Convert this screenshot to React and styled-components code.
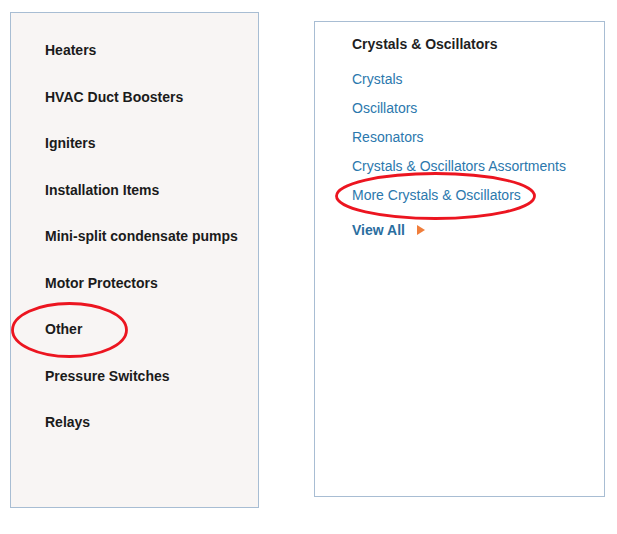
import React from 'react'
import styled, { createGlobalStyle } from 'styled-components'

const GlobalStyle = createGlobalStyle`
    body {
        margin: 0;
        background: #ffffff;
        font-family: "Liberation Sans", Arial, Helvetica, sans-serif;
    }
`

const Page = styled.div`
    display: flex;
    flex-direction: row;
    align-items: flex-start;
    width: 617px;
    height: 534px;
    padding: 12px 0 0 10px;
    box-sizing: border-box;
`

const CategoryPanel = styled.div`
    width: 249px;
    height: 496px;
    box-sizing: border-box;
    border: 1px solid #a8bdd3;
    background-color: #f8f5f4;
    padding: 14px 0 0 34px;
`

const CategoryList = styled.ul`
    list-style: none;
    margin: 0;
    padding: 0;
`

const CategoryItem = styled.li`
    position: relative;
    height: 46.5px;
    line-height: 46.5px;
    font-size: 14px;
    font-weight: bold;
    color: #1b1b1b;
`

const SubPanel = styled.div`
    width: 291px;
    height: 476px;
    margin: 9px 0 0 55px;
    box-sizing: border-box;
    border: 1px solid #a8bdd3;
    background-color: #ffffff;
    padding: 12px 0 0 37px;
`

const SubHeading = styled.h3`
    margin: 0 0 10.5px 0;
    font-size: 14px;
    line-height: 20px;
    font-weight: bold;
    color: #1f1f1f;
`

const SubLink = styled.a`
    position: relative;
    display: block;
    height: 29px;
    line-height: 29px;
    font-size: 14px;
    color: #2b78ad;
    text-decoration: none;
`

const ViewAll = styled.a`
    display: flex;
    align-items: center;
    gap: 12px;
    margin-top: 10.5px;
    line-height: 20px;
    font-size: 14px;
    font-weight: bold;
    color: #2a6e9f;
    text-decoration: none;
`

const Arrow = styled.span`
    width: 0;
    height: 0;
    border-top: 5px solid transparent;
    border-bottom: 5px solid transparent;
    border-left: 8px solid #f07e3b;
`

// red marker ring drawn over a highlighted entry
const Ring = styled.svg`
    position: absolute;
    left: ${p => p.$left}px;
    top: ${p => p.$top}px;
    pointer-events: none;
    overflow: visible;
`

function Circled({ left, top, width, height }) {
    return (
        <Ring $left={left} $top={top} width={width} height={height}>
            <ellipse
                cx={width / 2}
                cy={height / 2}
                rx={width / 2 - 1.5}
                ry={height / 2 - 1.5}
                fill="none"
                stroke="#ec1520"
                strokeWidth="2.8"
            />
        </Ring>
    )
}

const categories = [
    'Heaters',
    'HVAC Duct Boosters',
    'Igniters',
    'Installation Items',
    'Mini-split condensate pumps',
    'Motor Protectors',
    'Other',
    'Pressure Switches',
    'Relays',
]

const links = [
    'Crystals',
    'Oscillators',
    'Resonators',
    'Crystals & Oscillators Assortments',
    'More Crystals & Oscillators',
]

function App() {
    return (
        <>
            <GlobalStyle />
            <Page>
                {/* category column */}
                <CategoryPanel>
                    <CategoryList>
                        {categories.map(name => (
                            <CategoryItem key={name}>
                                {name}
                                {name === 'Other' && (
                                    <Circled left={-34} top={-4} width={117} height={56} />
                                )}
                            </CategoryItem>
                        ))}
                    </CategoryList>
                </CategoryPanel>

                {/* sub category links */}
                <SubPanel>
                    <SubHeading>Crystals &amp; Oscillators</SubHeading>
                    {links.map(name => (
                        <SubLink key={name} href="#">
                            {name}
                            {name.startsWith('More') && (
                                <Circled left={-17} top={-9} width={201} height={48} />
                            )}
                        </SubLink>
                    ))}
                    <ViewAll href="#">
                        View All
                        <Arrow />
                    </ViewAll>
                </SubPanel>
            </Page>
        </>
    )
}

export default App
